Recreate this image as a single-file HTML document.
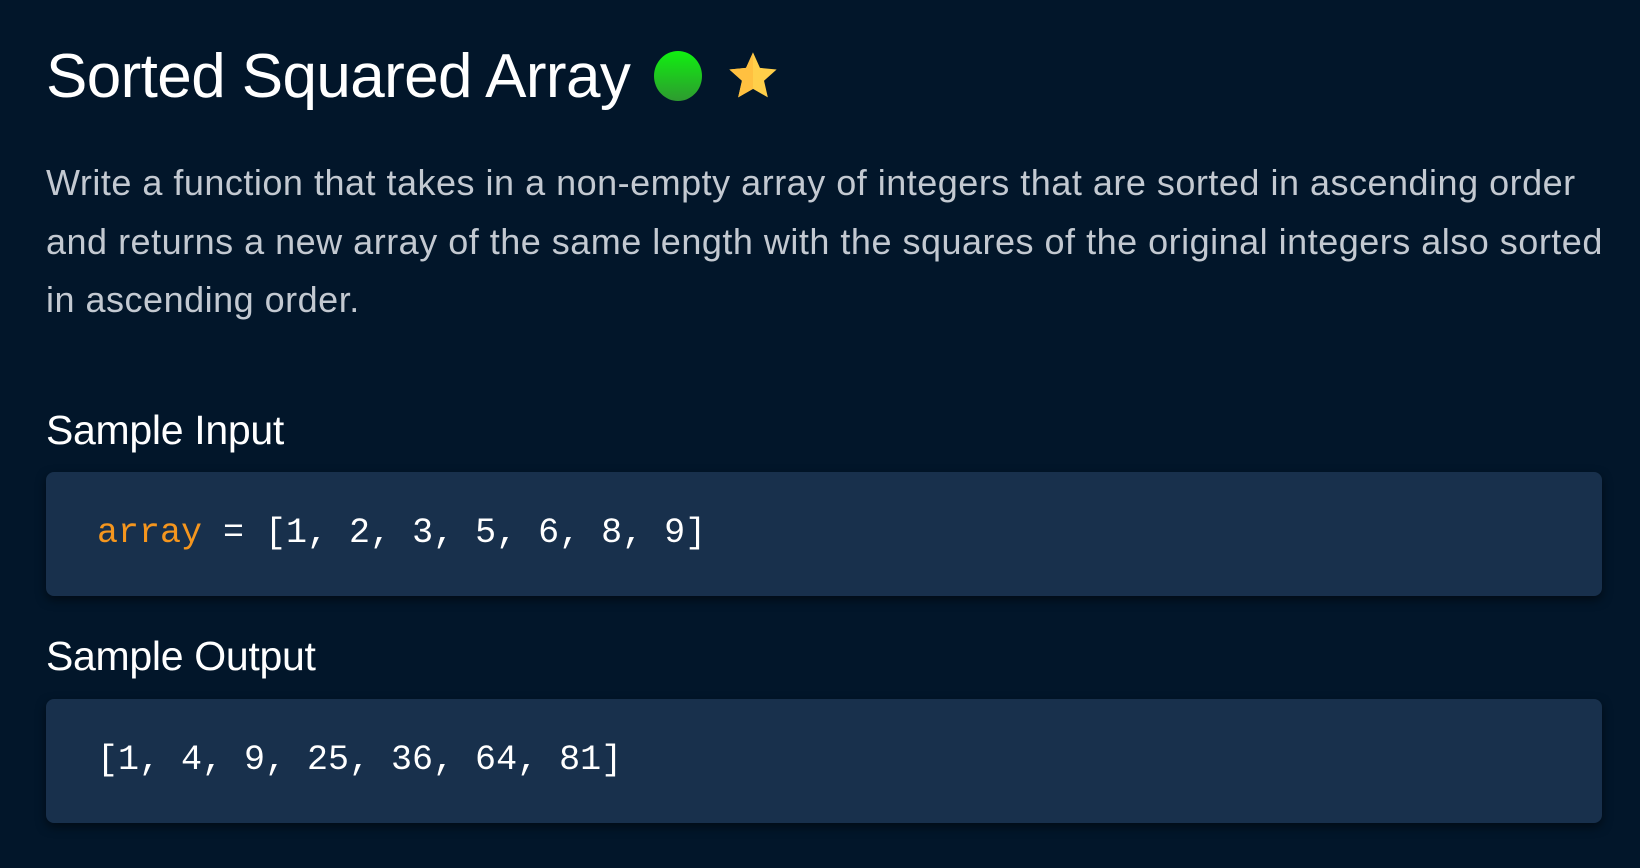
<!DOCTYPE html>
<html><head><meta charset="utf-8"><style>
body{margin:0;width:1640px;height:868px;background:#02162a;overflow:hidden;position:relative;font-family:"Liberation Sans",sans-serif}
.a{position:absolute;white-space:nowrap}
h1{position:absolute;left:46px;top:46px;margin:0;font-size:62px;line-height:62px;font-weight:normal;color:#fff;letter-spacing:-0.6px;white-space:nowrap}
.p{position:absolute;left:46px;font-size:36px;line-height:36px;color:#c3c9d1;letter-spacing:0.5px;white-space:nowrap}
.h{position:absolute;left:46px;font-size:41px;line-height:41px;color:#fff;letter-spacing:-0.3px}
.box{position:absolute;left:46px;width:1556px;height:124px;background:#18304c;border-radius:8px;box-shadow:0 4px 10px rgba(0,0,0,.5)}
.code{position:absolute;left:51px;top:44px;font-family:"Liberation Mono",monospace;font-size:35px;line-height:35px;color:#fff;white-space:nowrap}
</style></head><body>
<h1>Sorted Squared Array</h1>
<svg class="a" style="left:652px;top:48px" width="52" height="56"><defs><linearGradient id="g" x1="0" y1="0" x2="0" y2="1"><stop offset="0" stop-color="#10f010"/><stop offset="1" stop-color="#2e9a30"/></linearGradient></defs><ellipse cx="26" cy="28" rx="24" ry="25" fill="url(#g)"/></svg>
<svg class="a" style="left:726px;top:50px" width="54" height="52" viewBox="0 0 24 23"><path d="M12 1l3.1 6.9 7.4.7-5.6 5 1.7 7.4L12 17.2 5.4 21l1.7-7.4-5.6-5 7.4-.7z" fill="#ffcf4a"/><path d="M12 1v16.2L5.4 21l1.7-7.4-5.6-5 7.4-.7z" fill="#ffc040"/></svg>
<div class="p" style="top:165px">Write a function that takes in a non-empty array of integers that are sorted in ascending order</div>
<div class="p" style="top:224px">and returns a new array of the same length with the squares of the original integers also sorted</div>
<div class="p" style="top:282px">in ascending order.</div>
<div class="h" style="top:410px">Sample Input</div>
<div class="box" style="top:472px"><div class="code"><span style="color:#f5961e">array</span> = [1, 2, 3, 5, 6, 8, 9]</div></div>
<div class="h" style="top:636px">Sample Output</div>
<div class="box" style="top:699px"><div class="code">[1, 4, 9, 25, 36, 64, 81]</div></div>
</body></html>
